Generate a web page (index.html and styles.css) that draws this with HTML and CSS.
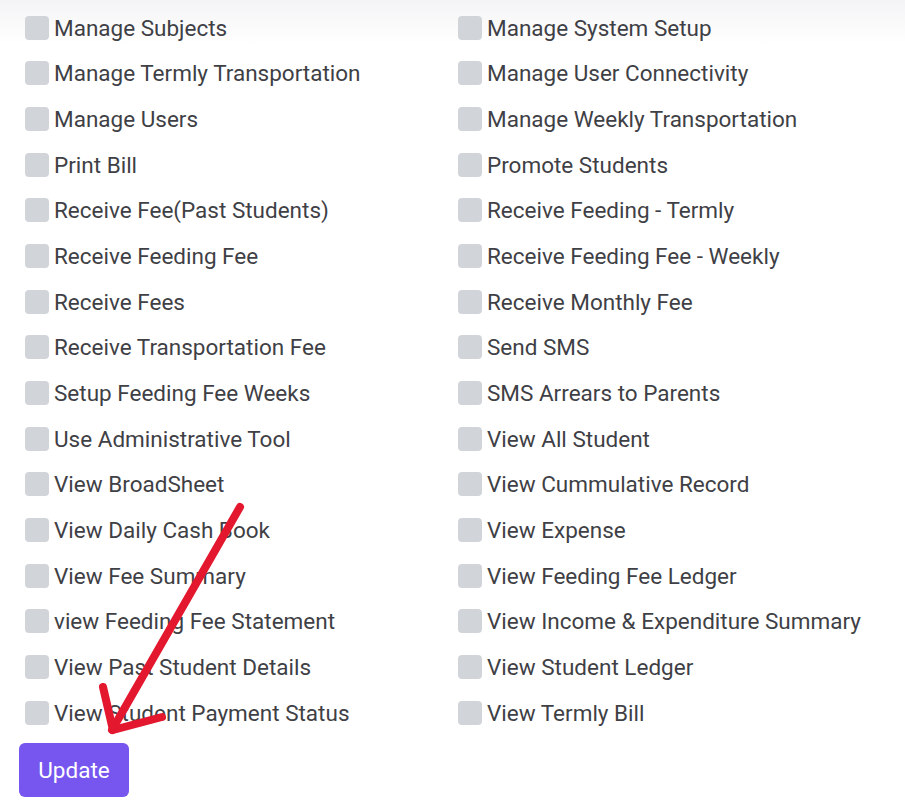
FILE: index.html
```html
<!DOCTYPE html>
<html lang="en">
<head>
<meta charset="utf-8">
<title>Permissions</title>
<link rel="stylesheet" href="styles.css">
</head>
<body>
<div class="page">
  <form class="perm-form">
    <div class="perm-grid">
      <label class="perm"><span class="box"></span><span class="label">Manage Subjects</span></label>
      <label class="perm"><span class="box"></span><span class="label">Manage System Setup</span></label>
      <label class="perm"><span class="box"></span><span class="label">Manage Termly Transportation</span></label>
      <label class="perm"><span class="box"></span><span class="label">Manage User Connectivity</span></label>
      <label class="perm"><span class="box"></span><span class="label">Manage Users</span></label>
      <label class="perm"><span class="box"></span><span class="label">Manage Weekly Transportation</span></label>
      <label class="perm"><span class="box"></span><span class="label">Print Bill</span></label>
      <label class="perm"><span class="box"></span><span class="label">Promote Students</span></label>
      <label class="perm"><span class="box"></span><span class="label">Receive Fee(Past Students)</span></label>
      <label class="perm"><span class="box"></span><span class="label">Receive Feeding - Termly</span></label>
      <label class="perm"><span class="box"></span><span class="label">Receive Feeding Fee</span></label>
      <label class="perm"><span class="box"></span><span class="label">Receive Feeding Fee - Weekly</span></label>
      <label class="perm"><span class="box"></span><span class="label">Receive Fees</span></label>
      <label class="perm"><span class="box"></span><span class="label">Receive Monthly Fee</span></label>
      <label class="perm"><span class="box"></span><span class="label">Receive Transportation Fee</span></label>
      <label class="perm"><span class="box"></span><span class="label">Send SMS</span></label>
      <label class="perm"><span class="box"></span><span class="label">Setup Feeding Fee Weeks</span></label>
      <label class="perm"><span class="box"></span><span class="label">SMS Arrears to Parents</span></label>
      <label class="perm"><span class="box"></span><span class="label">Use Administrative Tool</span></label>
      <label class="perm"><span class="box"></span><span class="label">View All Student</span></label>
      <label class="perm"><span class="box"></span><span class="label">View BroadSheet</span></label>
      <label class="perm"><span class="box"></span><span class="label">View Cummulative Record</span></label>
      <label class="perm"><span class="box"></span><span class="label">View Daily Cash Book</span></label>
      <label class="perm"><span class="box"></span><span class="label">View Expense</span></label>
      <label class="perm"><span class="box"></span><span class="label">View Fee Summary</span></label>
      <label class="perm"><span class="box"></span><span class="label">View Feeding Fee Ledger</span></label>
      <label class="perm"><span class="box"></span><span class="label">view Feeding Fee Statement</span></label>
      <label class="perm"><span class="box"></span><span class="label">View Income &amp; Expenditure Summary</span></label>
      <label class="perm"><span class="box"></span><span class="label">View Past Student Details</span></label>
      <label class="perm"><span class="box"></span><span class="label">View Student Ledger</span></label>
      <label class="perm"><span class="box"></span><span class="label">View Student Payment Status</span></label>
      <label class="perm"><span class="box"></span><span class="label">View Termly Bill</span></label>
    </div>
    <button type="button" class="btn-update">Update</button>
  </form>
  <svg class="annot-arrow" width="905" height="812" viewBox="0 0 905 812" aria-hidden="true">
    <g fill="none" stroke="#e3182f" stroke-width="8" stroke-linecap="round" stroke-linejoin="round">
      <path d="M240 507 L112 730"/>
      <path d="M103 687 L113 730 L162 717"/>
    </g>
  </svg>
</div>
</body>
</html>
```
FILE: styles.css
```css
html, body {
  margin: 0;
  padding: 0;
}
body {
  background: linear-gradient(to bottom, #f4f4f6 0px, #ffffff 44px);
  background-repeat: no-repeat;
  background-color: #ffffff;
  font-family: Roboto, "Liberation Sans", Arial, sans-serif;
  color: #3f3f46;
  width: 905px;
  height: 812px;
  overflow: hidden;
}
.page {
  position: relative;
  width: 905px;
  height: 812px;
}
.perm-form {
  padding: 5px 0 0 19px;
}
.perm-grid {
  display: grid;
  grid-template-columns: 433px 433px;
  grid-auto-rows: 45.67px;
}
.perm {
  display: flex;
  align-items: center;
  gap: 5px;
  padding-left: 6px;
  font-size: 22.5px;
  line-height: 26px;
  cursor: pointer;
  white-space: nowrap;
}
.box {
  flex: 0 0 24px;
  width: 24px;
  height: 24px;
  border-radius: 4px;
  background: #d1d5da;
}
.btn-update {
  display: block;
  margin-top: 7px;
  width: 110px;
  height: 54px;
  border: none;
  border-radius: 6px;
  background: #7656ef;
  color: #ffffff;
  font-family: Roboto, "Liberation Sans", Arial, sans-serif;
  font-size: 22.5px;
  padding: 0;
  cursor: pointer;
}
.annot-arrow {
  position: absolute;
  left: 0;
  top: 0;
  pointer-events: none;
}
```
